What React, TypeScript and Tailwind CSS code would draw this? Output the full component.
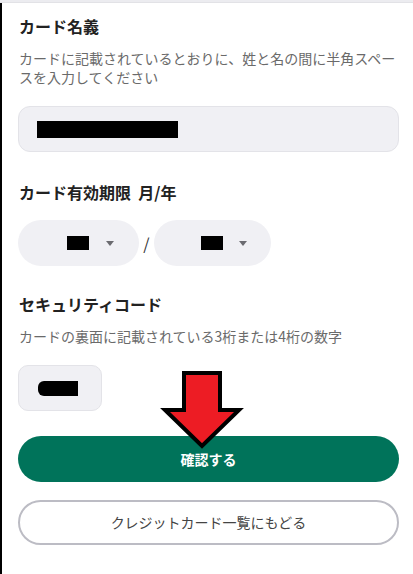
import React from "react";

const font = { fontFamily: '"Noto Sans CJK JP", "Noto Sans", sans-serif' };

function Caret() {
  return (
    <svg width="8" height="5" viewBox="0 0 8 5" className="block">
      <path d="M0 0 L8 0 L4 5 Z" fill="#6b6b70" />
    </svg>
  );
}

export default function App() {
  return (
    <div className="relative w-[413px] h-[574px] overflow-hidden bg-white" style={font}>
      <div className="h-[3px] bg-[#ececf0] border-b border-[#e2e2e6]" />
      <div className="flex h-[571px]">
        <div className="w-[2px] bg-black shrink-0" />
        <div className="flex-1 pl-[16px] pr-[14px] flex flex-col">
          <h2 className="mt-[11px] text-[16px] leading-[24px] font-bold text-[#222] pl-[1px]">カード名義</h2>
          <p className="mt-[11px] text-[14px] leading-[19px] text-[#6a6a6a] pl-[1px] tracking-[0px]">
            カードに記載されているとおりに、姓と名の間に半角スペースを入力してください
          </p>
          <div className="mt-[19px] h-[46px] rounded-[12px] bg-[#f0f0f4] border-[1.5px] border-[#e3e3e8] flex items-center pl-[18px]">
            <div className="w-[141px] h-[17px] bg-black" />
          </div>

          <h2 className="mt-[28px] text-[16px] leading-[24px] font-bold text-[#222] pl-[1px]">カード有効期限&nbsp;&nbsp;月/年</h2>
          <div className="mt-[16px] flex items-center">
            <div className="w-[121px] h-[46px] rounded-full bg-[#f0f0f4] flex items-center justify-end pr-[25px] gap-[17px]">
              <div className="w-[22px] h-[14px] bg-black" />
              <Caret />
            </div>
            <span className="w-[15px] text-center text-[16px] text-[#333] leading-none">/</span>
            <div className="w-[117px] h-[46px] rounded-full bg-[#f0f0f4] flex items-center justify-end pr-[24px] gap-[16px]">
              <div className="w-[22px] h-[14px] bg-black" />
              <Caret />
            </div>
          </div>

          <h2 className="mt-[26px] text-[16px] leading-[24px] font-bold text-[#222] pl-[1px]">セキュリティコード</h2>
          <p className="mt-[10px] text-[14px] leading-[20px] text-[#6a6a6a] pl-[1px]">
            カードの裏面に記載されている3桁または4桁の数字
          </p>
          <div className="mt-[19px] w-[84px] h-[46px] rounded-[10px] bg-[#f0f0f4] border-[1.5px] border-[#e3e3e8] flex items-center pl-[19px]">
            <div className="w-[40px] h-[15px] bg-black rounded-l-[6px]" />
          </div>

          <button className="mt-[25px] h-[46px] rounded-full bg-[#00735a] text-white text-[14px] font-bold flex items-center justify-center">
            確認する
          </button>
          <button className="mt-[18px] h-[45px] rounded-full bg-white border-2 border-[#bcbcc4] text-[#444] text-[14px] flex items-center justify-center">
            クレジットカード一覧にもどる
          </button>
        </div>
      </div>

      <svg className="absolute left-0 top-0 pointer-events-none" width="413" height="574" viewBox="0 0 413 574">
        <path
          d="M184 373 L220 373 L220 410 L239 410 L202 446 L165 410 L184 410 Z"
          fill="#ed1c24"
          stroke="#000"
          strokeWidth="4"
          strokeLinejoin="miter"
        />
      </svg>
    </div>
  );
}
